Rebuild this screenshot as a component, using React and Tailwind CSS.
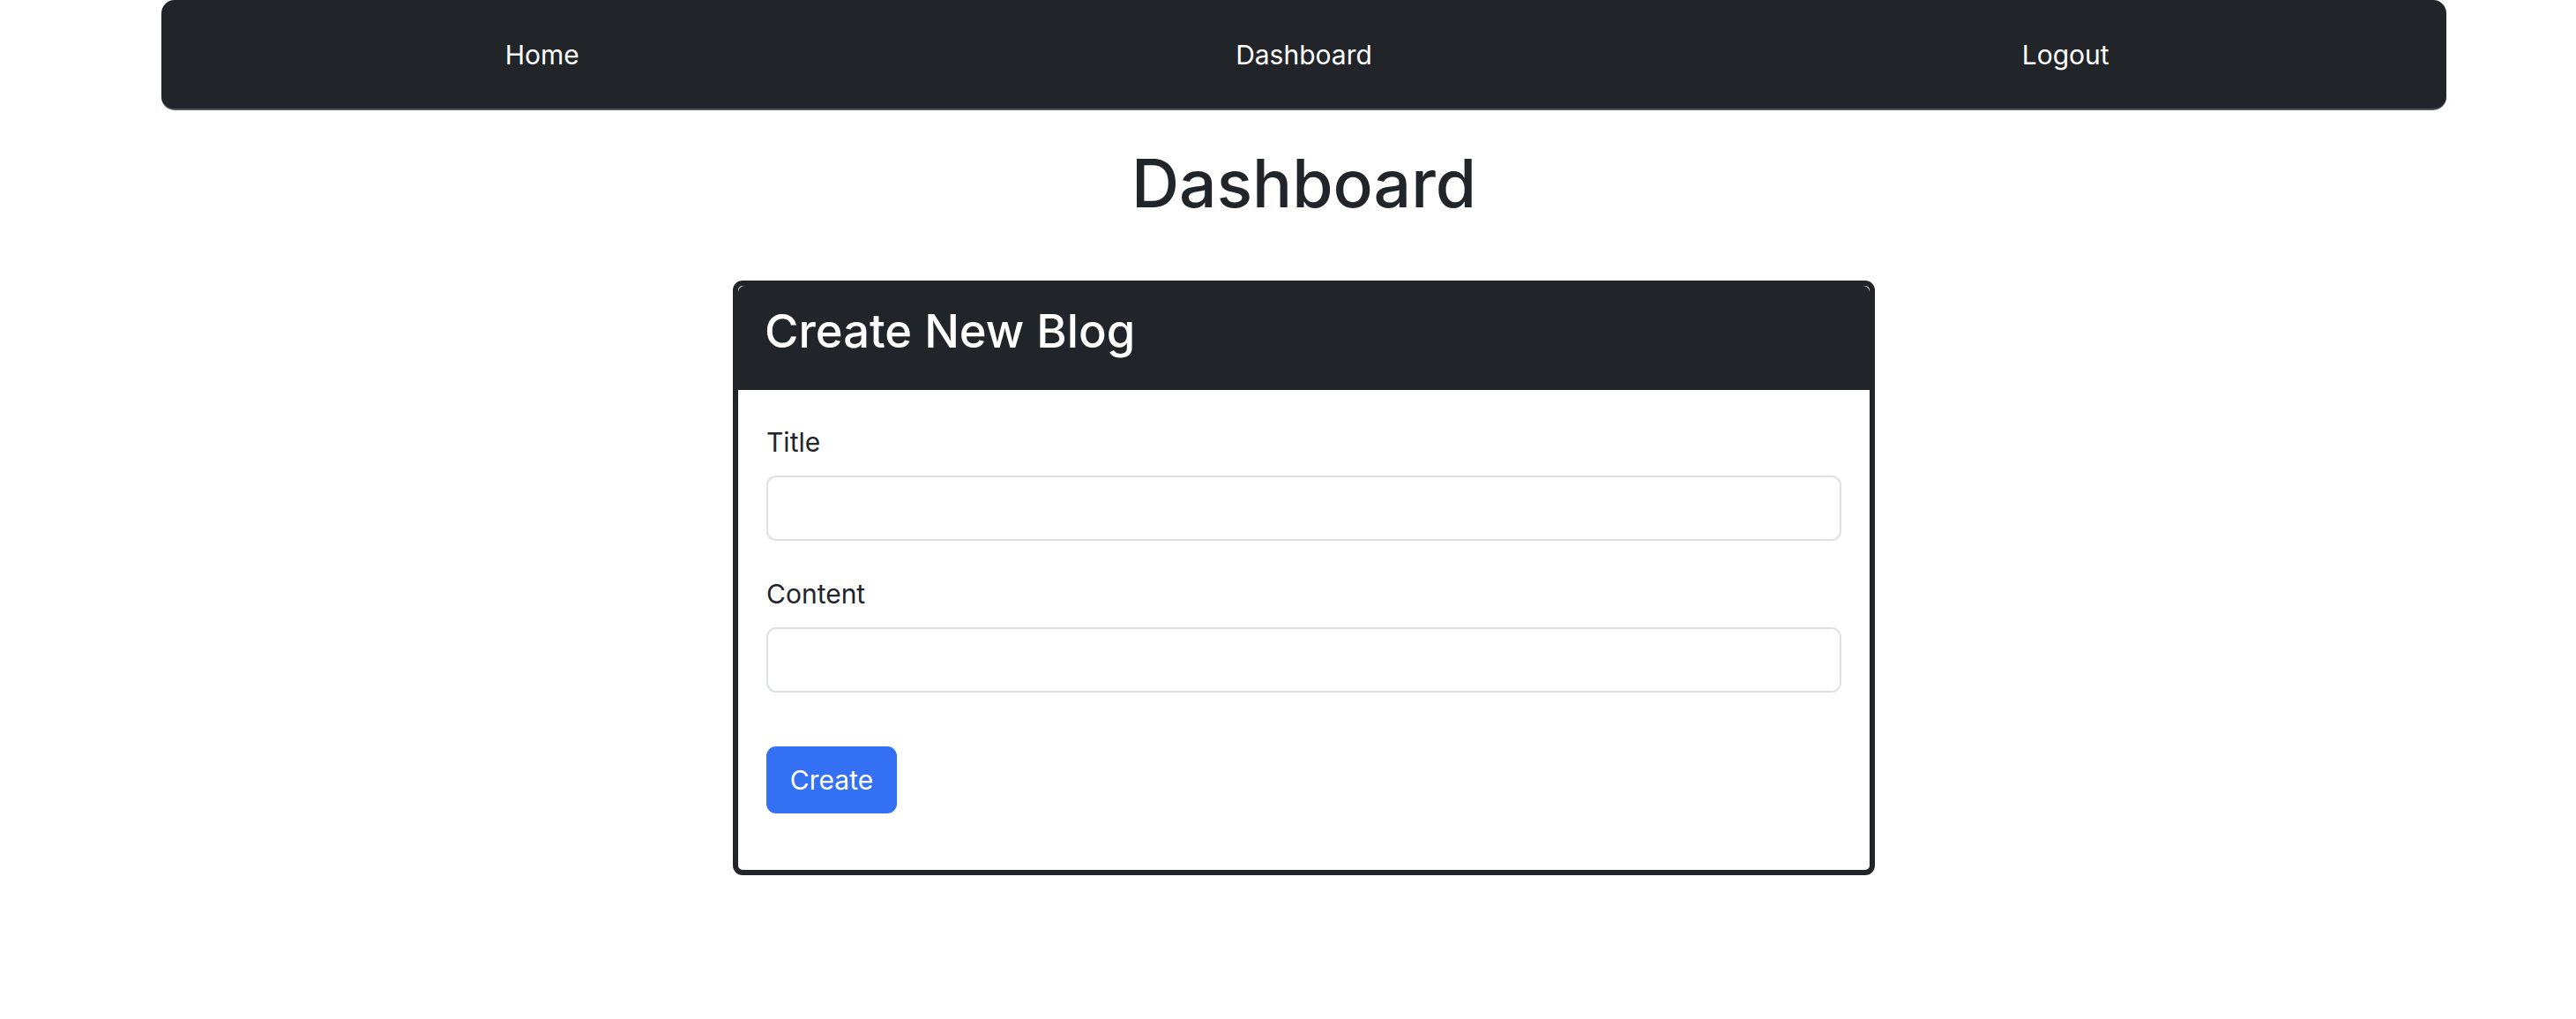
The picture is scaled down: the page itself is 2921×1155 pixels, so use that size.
export default function App() {
  return (
    <div className="min-h-screen bg-white" style={{ fontFamily: "Inter, 'Noto Sans', sans-serif" }}>
      <div className="ml-[183px] w-[2591px]">
        <nav className="grid h-[125px] grid-cols-3 items-center rounded-[15px] border-b-2 border-[#50555b] bg-[#212529] pt-[2px] text-[30px] text-white">
          <a className="text-center leading-[45px]">Home</a>
          <a className="text-center leading-[45px]">Dashboard</a>
          <a className="text-center leading-[45px]">Logout</a>
        </nav>
        <h1 className="mt-[38px] mb-[65px] text-center text-[75px] font-medium leading-[90px] text-[#212529]">
          Dashboard
        </h1>
        <div className="mx-auto w-[1295px] overflow-hidden rounded-[11px] border-[6px] border-[#212529] bg-white">
          <div className="rounded-t-[7px] bg-[#212529] px-[30px] pt-[20px] pb-[35px]">
            <h3 className="text-[52.5px] font-medium leading-[63px] text-white">Create New Blog</h3>
          </div>
          <div className="px-[32px] pt-[37px] pb-[64px] text-[#212529]">
            <label className="mb-[15px] block text-[30px] leading-[45px]">Title</label>
            <input className="mb-[38px] block h-[74px] w-full rounded-[11px] border-2 border-[#dee2e6] bg-white px-[22px] text-[30px] outline-none" />
            <label className="mb-[15px] block text-[30px] leading-[45px]">Content</label>
            <input className="block h-[74px] w-full rounded-[11px] border-2 border-[#dee2e6] bg-white px-[22px] text-[30px] outline-none" />
            <button className="mt-[61px] flex h-[76px] w-[148px] items-center justify-center rounded-[11px] bg-[#3370f4] text-[30px] text-white">
              Create
            </button>
          </div>
        </div>
      </div>
    </div>
  );
}
